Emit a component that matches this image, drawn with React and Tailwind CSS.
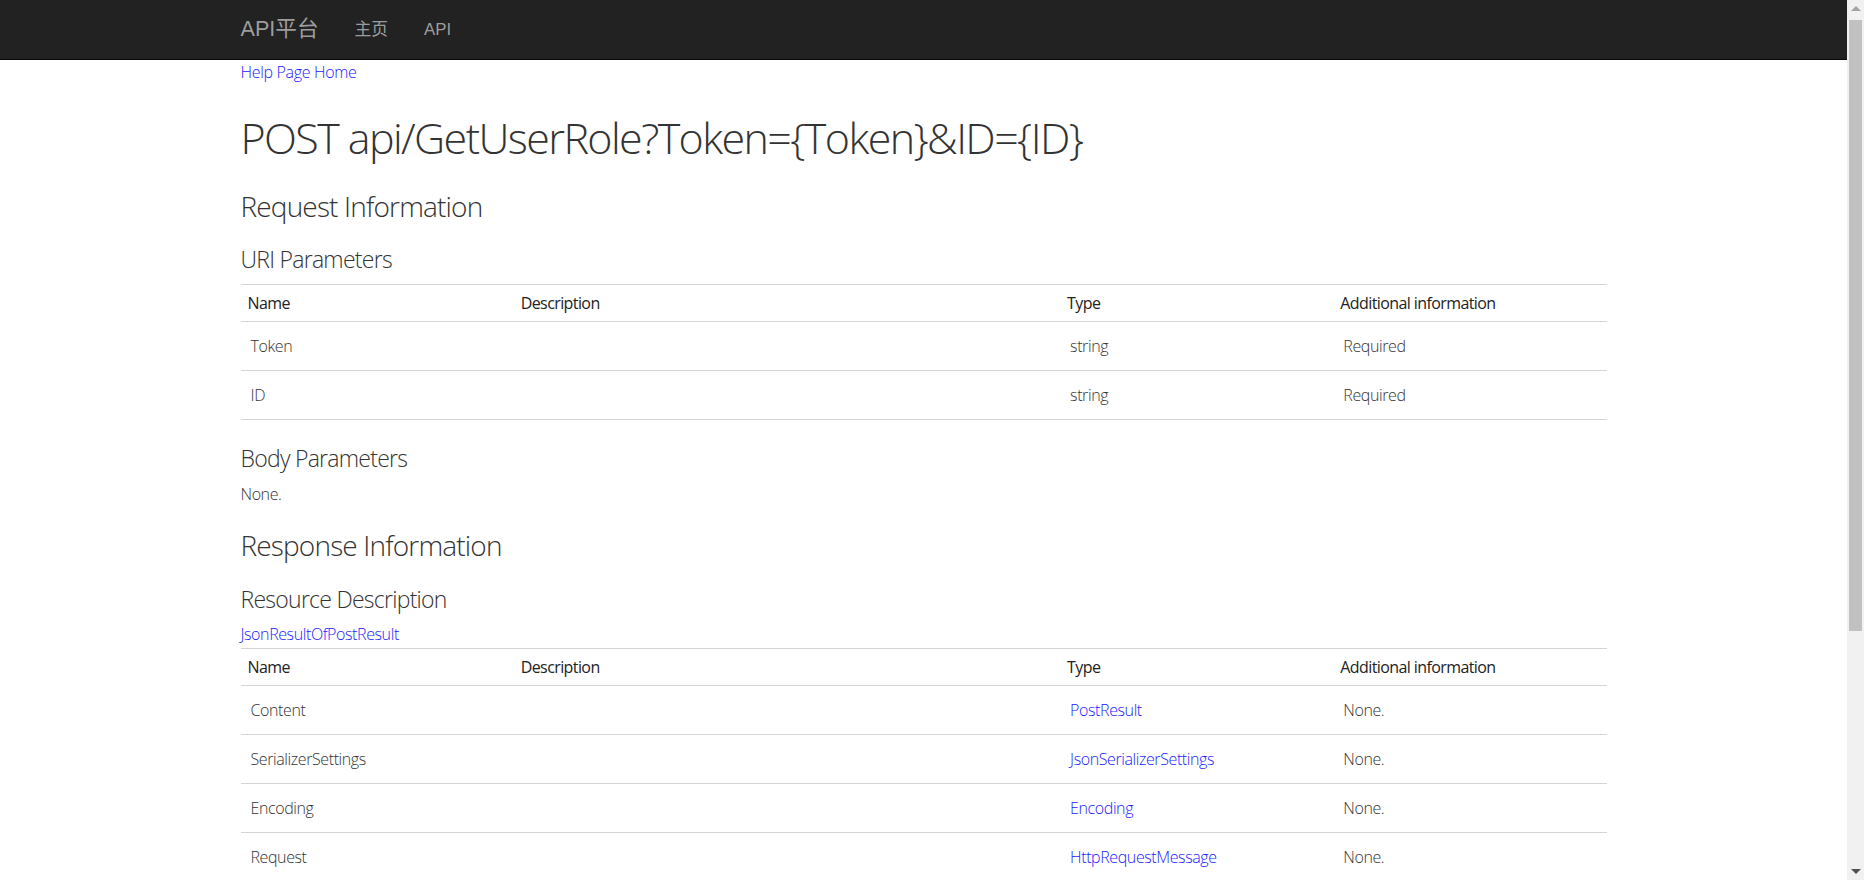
import React from 'react';

const uriParams = [
    { name: 'Token', type: 'string', info: 'Required' },
    { name: 'ID', type: 'string', info: 'Required' },
];

const resourceProps = [
    { name: 'Content', type: 'PostResult' },
    { name: 'SerializerSettings', type: 'JsonSerializerSettings' },
    { name: 'Encoding', type: 'Encoding' },
    { name: 'Request', type: 'HttpRequestMessage' },
];

const HeadRow = () => (
    <thead>
        <tr className="border-b border-[#d4d4d4] text-[16px] tracking-[-0.037em]">
            <th className="px-[7px] py-[6px] text-left font-normal text-[#222]">Name</th>
            <th className="px-[7px] py-[6px] text-left font-normal text-[#222]">Description</th>
            <th className="px-[7px] py-[6px] text-left font-normal text-[#222]">Type</th>
            <th className="px-[7px] py-[6px] text-left font-normal text-[#222]">Additional information</th>
        </tr>
    </thead>
);

const Cols = () => (
    <colgroup>
        <col className="w-[20%]" />
        <col className="w-[40%]" />
        <col className="w-[20%]" />
        <col className="w-[20%]" />
    </colgroup>
);

const HelpTable = ({ rows, linkType, className }) => (
    <table className={`w-full table-fixed border-collapse border-t border-[#d4d4d4] leading-[24px] ${className}`}>
        <Cols />
        <HeadRow />
        <tbody className="font-light text-[16px] tracking-[-0.025em]">
            {rows.map((r) => (
                <tr key={r.name} className="border-b border-[#d4d4d4]">
                    <td className="px-[10px] py-[12px]">{r.name}</td>
                    <td className="px-[10px] py-[12px]"></td>
                    <td className="px-[10px] py-[12px]">
                        {linkType ? <a className="text-[#1a1aff]">{r.type}</a> : r.type}
                    </td>
                    <td className="px-[10px] py-[12px]">{r.info || 'None.'}</td>
                </tr>
            ))}
        </tbody>
    </table>
);

const Scrollbar = () => (
    <div className="w-[17px] h-full bg-[#f1f1f1] flex flex-col items-center shrink-0">
        <div className="h-[17px] flex items-center justify-center">
            <div className="w-0 h-0 border-x-[5px] border-x-transparent border-b-[5px] border-b-[#a3a3a3]" />
        </div>
        <div className="w-[13px] h-[611px] mt-[3px] bg-[#c1c1c1]" />
        <div className="flex-1" />
        <div className="h-[17px] flex items-center justify-center">
            <div className="w-0 h-0 border-x-[5px] border-x-transparent border-t-[5px] border-t-[#505050]" />
        </div>
    </div>
);

const App = () => {
    return (
        <div className="h-screen w-full flex overflow-hidden bg-white text-[#333] font-['Open_Sans','Noto_Sans_CJK_SC',sans-serif]">
            <div className="flex-1 flex flex-col min-w-0">
                {/* navbar */}
                <div className="h-[60px] shrink-0 bg-[#222] border-b border-[#080808]">
                    <div className="w-[1366px] mx-auto h-full flex items-center font-['Liberation_Sans','Noto_Sans_CJK_SC',sans-serif] text-[#9d9d9d]">
                        <span className="text-[21.6px] pr-[18px]">API平台</span>
                        <span className="text-[16.8px] px-[18px]">主页</span>
                        <span className="text-[16.8px] px-[18px]">API</span>
                    </div>
                </div>

                <div className="w-[1366px] mx-auto">
                    <a className="block text-[16px] leading-[24px] font-light tracking-[-0.02em] text-[#1a1aff]">Help Page Home</a>

                    <h1 className="mt-[30px] text-[43px] leading-[48px] font-light tracking-[-0.037em]">
                        POST api/GetUserRole?Token={'{'}Token{'}'}&amp;ID={'{'}ID{'}'}
                    </h1>

                    <h2 className="mt-[27px] text-[28px] leading-[34px] font-light tracking-[-0.03em]">Request Information</h2>

                    <h3 className="mt-[22px] text-[23px] leading-[28px] font-light tracking-[-0.032em]">URI Parameters</h3>
                    <HelpTable rows={uriParams} className="mt-[11px] mb-[24px]" />

                    <h3 className="text-[23px] leading-[28px] font-light tracking-[-0.032em]">Body Parameters</h3>
                    <p className="mt-[10px] text-[16px] leading-[24px] font-light tracking-[-0.025em]">None.</p>

                    <h2 className="mt-[22px] text-[28px] leading-[34px] font-light tracking-[-0.03em]">Response Information</h2>

                    <h3 className="mt-[23px] text-[23px] leading-[28px] font-light tracking-[-0.032em]">Resource Description</h3>
                    <a className="block mt-[9px] text-[16px] leading-[24px] font-light tracking-[-0.025em] text-[#1a1aff]">JsonResultOfPostResult</a>
                    <HelpTable rows={resourceProps} linkType className="mt-[2px]" />
                </div>
            </div>
            <Scrollbar />
        </div>
    );
};

export default App;
